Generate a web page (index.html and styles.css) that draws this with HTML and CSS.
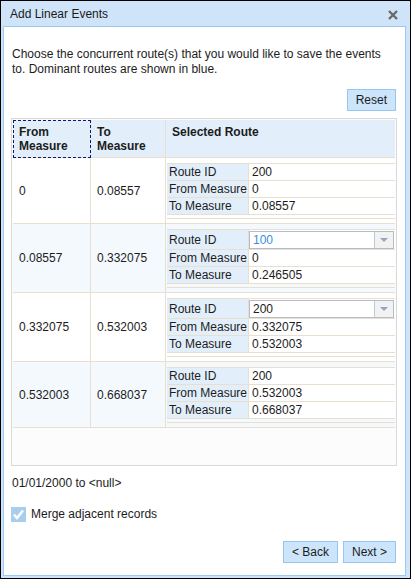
FILE: index.html
```html
<html>
<head>
    <title>Add Linear Events</title>
    <link rel="stylesheet" href="styles.css">
</head>
<body>
    <div class="dialog">
        <!-- Title bar -->
        <div class="titlebar">
            <span class="title">Add Linear Events</span>
            <span class="close">
                <svg width="10" height="10" viewBox="0 0 10 10"><path d="M1 1L9 9M9 1L1 9" stroke="#6a6a6a" stroke-width="2.4"/></svg>
            </span>
        </div>

        <div class="content">
            <p class="intro">Choose the concurrent route(s) that you would like to save the events to. Dominant routes are shown in blue.</p>

            <div class="toolbar">
                <button class="btn">Reset</button>
            </div>

            <!-- Concurrent route grid -->
            <div class="grid-box">
                <table class="grid">
                    <colgroup>
                        <col class="c-from">
                        <col class="c-to">
                        <col class="c-route">
                    </colgroup>
                    <thead>
                        <tr>
                            <th class="focused">From Measure</th>
                            <th>To Measure</th>
                            <th class="last">Selected Route</th>
                        </tr>
                    </thead>
                    <tbody>
                        <tr>
                            <td>0</td>
                            <td>0.08557</td>
                            <td class="route-cell">
                                <div class="route-box">
                                    <table class="route">
                                        <tr><td class="lbl">Route ID</td><td>200</td></tr>
                                        <tr><td class="lbl">From Measure</td><td>0</td></tr>
                                        <tr><td class="lbl">To Measure</td><td>0.08557</td></tr>
                                    </table>
                                </div>
                            </td>
                        </tr>
                        <tr class="alt">
                            <td>0.08557</td>
                            <td>0.332075</td>
                            <td class="route-cell">
                                <div class="route-box">
                                    <table class="route">
                                        <tr><td class="lbl">Route ID</td><td class="pick"><div class="combo dominant"><span class="val">100</span><span class="arrow"></span></div></td></tr>
                                        <tr><td class="lbl">From Measure</td><td>0</td></tr>
                                        <tr><td class="lbl">To Measure</td><td>0.246505</td></tr>
                                    </table>
                                </div>
                            </td>
                        </tr>
                        <tr>
                            <td>0.332075</td>
                            <td>0.532003</td>
                            <td class="route-cell">
                                <div class="route-box">
                                    <table class="route">
                                        <tr><td class="lbl">Route ID</td><td class="pick"><div class="combo"><span class="val">200</span><span class="arrow"></span></div></td></tr>
                                        <tr><td class="lbl">From Measure</td><td>0.332075</td></tr>
                                        <tr><td class="lbl">To Measure</td><td>0.532003</td></tr>
                                    </table>
                                </div>
                            </td>
                        </tr>
                        <tr class="alt">
                            <td>0.532003</td>
                            <td>0.668037</td>
                            <td class="route-cell">
                                <div class="route-box">
                                    <table class="route">
                                        <tr><td class="lbl">Route ID</td><td>200</td></tr>
                                        <tr><td class="lbl">From Measure</td><td>0.532003</td></tr>
                                        <tr><td class="lbl">To Measure</td><td>0.668037</td></tr>
                                    </table>
                                </div>
                            </td>
                        </tr>
                    </tbody>
                </table>
            </div>

            <div class="date-range">01/01/2000 to &lt;null&gt;</div>

            <label class="check">
                <span class="box">
                    <svg width="15" height="15" viewBox="0 0 15 15"><path d="M3 7.5l3 3.5 6-7.5" stroke="#fff" stroke-width="2.4" fill="none"/></svg>
                </span>
                Merge adjacent records
            </label>

            <div class="actions">
                <button class="btn">&lt; Back</button>
                <button class="btn">Next &gt;</button>
            </div>
        </div>
    </div>
</body>
</html>
```

FILE: styles.css
```css
body {
    margin: 0;
    font-family: "Liberation Sans", Arial, sans-serif;
    font-size: 12px;
    color: #1c1c1c;
}

table {
    font-family: "Liberation Sans", Arial, sans-serif;
    font-size: 12px;
    color: #1c1c1c;
}

.dialog {
    width: 411px;
    height: 579px;
    box-sizing: border-box;
    border: 1px solid #000;
    background-color: #cfe4f8;
    padding: 0 4px 2px 2px;
    display: flex;
    flex-direction: column;
}

.titlebar {
    height: 25px;
    flex: none;
    display: flex;
    align-items: center;
    justify-content: space-between;
    padding: 0 8px 0 7px;
}

.title {
    font-size: 12px;
    color: #1a1a1a;
}

.close {
    display: flex;
    margin-top: 2px;
}

.content {
    flex: 1;
    background-color: #fff;
    border: 1px solid #9ccbf1;
    padding: 0 8px 0 7px;
}

.intro {
    margin: 20px 0 0 1px;
    line-height: 15px;
}

.toolbar {
    margin-top: 12px;
    display: flex;
    justify-content: flex-end;
    padding-right: 1px;
}

.btn {
    height: 22px;
    padding: 0 8px;
    border: 1px solid #94c8f0;
    background-color: #cde5fb;
    font-family: "Liberation Sans", Arial, sans-serif;
    font-size: 12px;
    color: #1c1c1c;
    cursor: pointer;
}

.grid-box {
    margin-top: 7px;
    height: 348px;
    box-sizing: border-box;
    border: 1px solid #d9d9d9;
    padding: 1px;
    background-color: #fcfcfc;
}

.grid {
    width: 382px;
    table-layout: fixed;
    border-spacing: 0;
}

.c-from { width: 78px; }
.c-to { width: 75px; }

.grid th {
    background-color: #e2effb;
    text-align: left;
    vertical-align: top;
    font-weight: bold;
    line-height: 14px;
    padding: 5px 6px 4px;
    border-right: 1px solid #e8dfcf;
    border-bottom: 1px solid #e8dfcf;
}

.grid th.last {
    border-right: none;
}

.grid th.focused {
    outline: 1px dashed #0a1a78;
    outline-offset: -1px;
}

.grid > tbody > tr > td {
    padding: 0 6px;
    vertical-align: middle;
    border-right: 1px solid #e8dfcf;
    border-bottom: 1px solid #e8dfcf;
    background-color: #fff;
}

.grid > tbody > tr.alt > td {
    background-color: #f4f9fe;
}

.grid > tbody > tr > td.route-cell {
    padding: 0 0 0 1px;
    border-right: none;
}

.route-box {
    padding: 5px 0 3px;
    border-bottom: 1px solid #e8dfcf;
    margin-bottom: 4px;
}

.route {
    width: 100%;
    table-layout: fixed;
    border-spacing: 0;
    border-top: 1px solid #e8dfcf;
}

.route td {
    height: 16px;
    line-height: 16px;
    padding: 0 3px;
    border-bottom: 1px solid #e8dfcf;
    background-color: #fff;
    white-space: nowrap;
}

.route td.lbl {
    width: 77px;
    padding: 0 2px;
    background-color: #e2effb;
    border-right: 1px solid #e8dfcf;
}

.route td.pick {
    height: 17px;
    padding: 1px 1px 0 0;
    vertical-align: top;
}

.combo {
    height: 18px;
    box-sizing: border-box;
    border: 1px solid #b3bccb;
    background-color: #fff;
    display: flex;
}

.combo .val {
    flex: 1;
    padding-left: 3px;
    line-height: 16px;
}

.combo.dominant .val {
    color: #3a8ee0;
}

.combo .arrow {
    width: 18px;
    border-left: 1px solid #c3c9d4;
    background-color: #f2f2f2;
    display: flex;
    align-items: center;
    justify-content: center;
}

.combo .arrow::after {
    content: "";
    border-top: 4px solid #93a6c2;
    border-left: 4px solid transparent;
    border-right: 4px solid transparent;
}

.date-range {
    margin: 10px 0 0 1px;
    line-height: 15px;
}

.check {
    margin-top: 16px;
    display: flex;
    align-items: center;
    gap: 5px;
    line-height: 15px;
}

.check .box {
    width: 15px;
    height: 15px;
    background-color: #a8cdef;
    display: flex;
}

.actions {
    margin-top: 19px;
    display: flex;
    justify-content: flex-end;
    gap: 5px;
    padding-right: 1px;
}
```
